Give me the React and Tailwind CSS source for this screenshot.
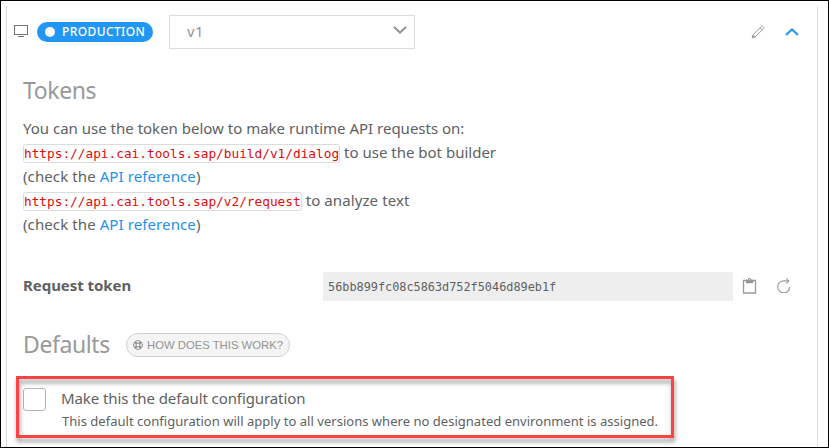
function Monitor() {
  return (
    <svg width="16" height="14" viewBox="0 0 16 14" fill="none" stroke="#6a6d70" shapeRendering="crispEdges">
      <path d="M.5 1.5h14v9h-14z" />
      <path d="M4 12.5h7" />
    </svg>
  );
}

function Chevron({ className, up }) {
  return (
    <svg className={className} width="14" height="8" viewBox="0 0 14 8" fill="none" stroke="currentColor" strokeWidth="2">
      <path d={up ? "M1 7l6-5.6 6 5.6" : "M1 1l6 5.6 6-5.6"} />
    </svg>
  );
}

function Pencil() {
  return (
    <svg width="14" height="14" viewBox="0 0 14 14" fill="none" stroke="#9c9c9c" strokeWidth="1">
      <path d="M1.4 12.4l.9-3 8-7.7c.6-.6 1.3-.6 1.8-.1l.4.4c.5.5.5 1.2-.1 1.8l-8 7.8zM9.3 2.9l2.2 2.2" />
      <path d="M1.2 12.7l.6-2.2 1.7 1.6z" fill="#8f8f8f" />
    </svg>
  );
}

function Clipboard() {
  return (
    <svg width="16" height="16" viewBox="0 0 16 16" fill="none" stroke="#9a9a9a">
      <path d="M1.5 2.5h12v12.5h-12z" strokeWidth="1.3" />
      <path d="M4 1.8h1.8a1.8 1.8 0 0 1 3.6 0h1.8v3.4H4z" fill="#949494" stroke="none" />
      <circle cx="7.6" cy="1.7" r=".6" fill="#fff" stroke="none" />
    </svg>
  );
}

function Refresh() {
  return (
    <svg width="14" height="15" viewBox="0 0 14 15" fill="none" stroke="#9a9a9a" strokeWidth="1.1">
      <path d="M12.7 9A6 6 0 1 1 7 2.9h4.6" />
      <path d="M9.3.4l2.6 2.5-2.6 2.5" />
    </svg>
  );
}

function HelpRing() {
  return (
    <svg width="10" height="10" viewBox="0 0 10 10" fill="none" stroke="#8f8f8f">
      <circle cx="5" cy="5" r="4.4" strokeWidth="1" />
      <circle cx="5" cy="5" r="2" strokeWidth="1" />
      <path d="M2 2l1.7 1.7M8 2L6.3 3.7M2 8l1.7-1.7M8 8L6.3 6.3" strokeWidth="2" />
    </svg>
  );
}

function Code({ children }) {
  return (
    <code className="mr-[4px] flex h-[19px] items-center rounded-[3px] border border-[#dcdcdc] pt-[2px] font-['DejaVu_Sans_Mono',monospace] text-[12.8px] tracking-[-0.02px] text-[#dd0b0b]">
      {children}
    </code>
  );
}

function Reference() {
  return (
    <div className="flex h-6 items-center pb-[2px] tracking-[0.1px] whitespace-pre">
      (check the <a className="text-[#2490f0]">API reference</a>)
    </div>
  );
}

export default function App() {
  return (
    <div className="relative h-[448px] w-[829px] overflow-hidden border border-black bg-white pt-[5px] pr-[10px] pl-[5px] font-['Noto_Sans',sans-serif] text-[15px] text-[#5e6163]">
      <div className="h-[441px] border-x border-[#dcdcdc] pl-[16px]">
        <header className="flex h-[52px] items-center">
          <div className="-ml-[9px] flex w-[15px] pb-[2px]"><Monitor /></div>
          <div className="ml-[8px] flex h-[20px] w-[116px] items-center rounded-full bg-[#2196f3] pl-[8px] text-white">
            <span className="size-[10px] rounded-full bg-white" />
            <span className="ml-[7px] text-[12px] font-medium tracking-[0.4px]">PRODUCTION</span>
          </div>
          <div className="ml-[16px] flex h-[34px] w-[246px] items-center border border-[#dcdcdc] pl-[17px] text-[#949494]">
            <span className="pb-[2px] tracking-[0.4px]">v1</span>
            <Chevron className="mr-[7px] mb-[4px] ml-auto" />
          </div>
          <div className="mr-[18px] ml-auto flex items-center gap-[20px] text-[#2196f3]">
            <Pencil />
            <Chevron up />
          </div>
        </header>

        <h2 className="mt-[17px] flex h-[32px] items-center pb-[2px] text-[23px] tracking-[-0.4px] text-[#999]">Tokens</h2>

        <div className="mt-[10px]">
          <div className="flex h-6 items-center pb-[2px] whitespace-nowrap">You can use the token below to make runtime API requests on:</div>
          <div className="flex h-6 items-center whitespace-nowrap"><Code>https://api.cai.tools.sap/build/v1/dialog</Code><span className="pb-[2px]">to use the bot builder</span></div>
          <Reference />
          <div className="flex h-6 items-center whitespace-nowrap"><Code>https://api.cai.tools.sap/v2/request</Code><span className="pb-[2px] tracking-[0.1px]">to analyze text</span></div>
          <Reference />
        </div>

        <div className="mt-[35px] flex h-[29px] items-center">
          <div className="w-[300px] pb-[2px] font-bold tracking-[-0.05px]">Request token</div>
          <div className="flex h-[29px] w-[410px] items-center bg-[#eee] pt-[2px] pl-[5px] font-['DejaVu_Sans_Mono',monospace] text-[11.85px]">56bb899fc08c5863d752f5046d89eb1f</div>
          <div className="ml-[9px] flex items-center gap-[19px] pb-[2px]"><Clipboard /><Refresh /></div>
        </div>

        <div className="mt-[28px] flex h-[32px] items-center">
          <h2 className="w-[103px] pb-[2px] text-[23px] tracking-[-0.4px] text-[#999]">Defaults</h2>
          <div className="flex h-[24px] w-[164px] items-center rounded-full border border-[#d0d0d0] bg-[#f5f5f5] pl-[6px] text-[#949494]">
            <HelpRing />
            <span className="ml-[4px] font-['Liberation_Sans',sans-serif] text-[11.3px] whitespace-nowrap">HOW DOES THIS WORK?</span>
          </div>
        </div>

        <label className="mt-[26px] flex">
          <span className="mt-[1px] size-[23px] rounded-[3px] border border-[#b5b5b5] bg-white" />
          <span className="ml-[15px] block">
            <span className="flex h-[24px] items-center pb-[2px] tracking-[-0.1px]">Make this the default configuration</span>
            <span className="ml-[1px] flex h-[22px] items-center text-[13px] tracking-[0.025px] whitespace-nowrap">This default configuration will apply to all versions where no designated environment is assigned.</span>
          </span>
        </label>
      </div>
      <div className="absolute top-[375px] left-[15px] h-[62px] w-[658px] border-[3px] border-[#ff4343] drop-shadow-[1px_4px_2px_rgba(0,0,0,0.4)]" />
    </div>
  );
}
